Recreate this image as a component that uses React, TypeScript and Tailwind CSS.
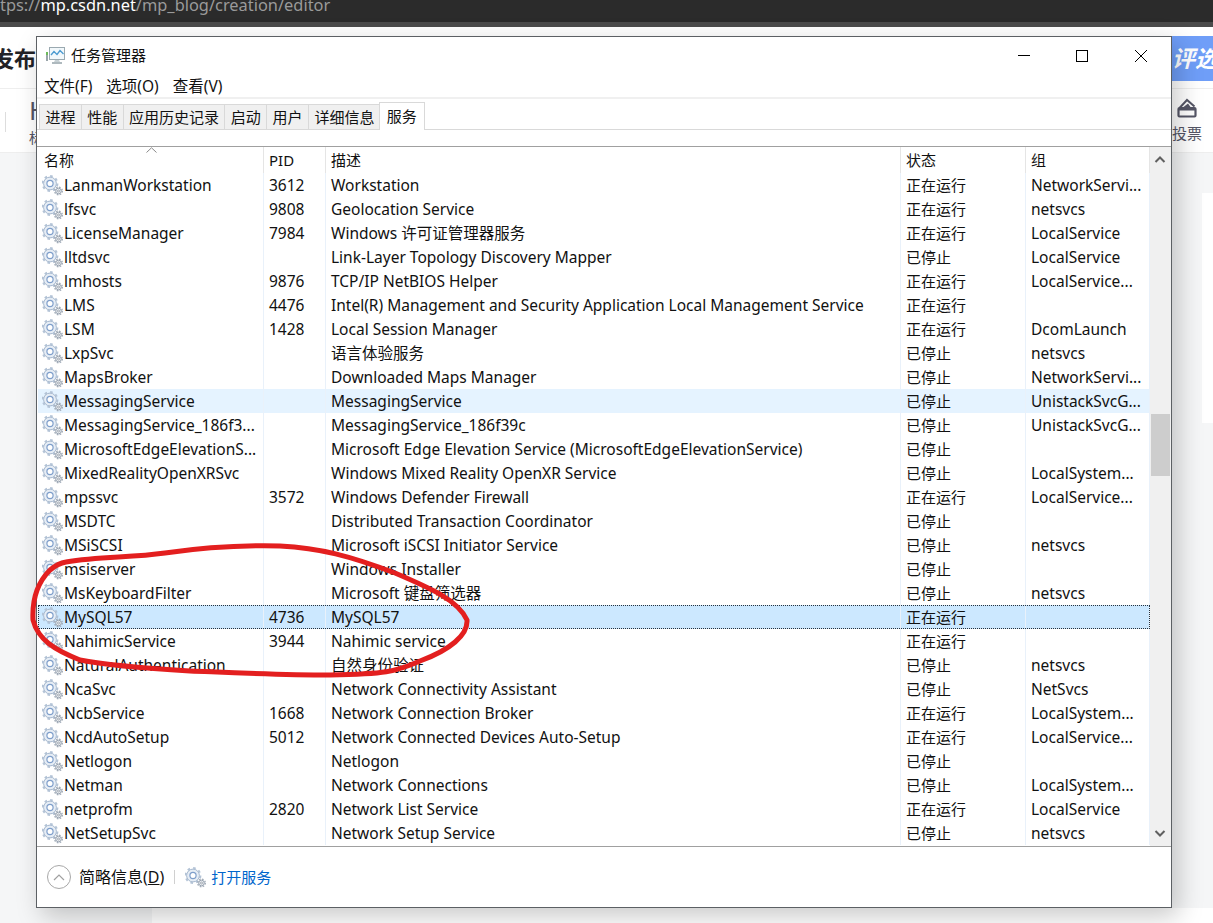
const font = "font-['Noto_Sans','Noto_Sans_CJK_SC',sans-serif]";

const services: [string, string, string, string, string][] = [
  ["LanmanWorkstation", "3612", "Workstation", "正在运行", "NetworkServi..."],
  ["lfsvc", "9808", "Geolocation Service", "正在运行", "netsvcs"],
  ["LicenseManager", "7984", "Windows 许可证管理器服务", "正在运行", "LocalService"],
  ["lltdsvc", "", "Link-Layer Topology Discovery Mapper", "已停止", "LocalService"],
  ["lmhosts", "9876", "TCP/IP NetBIOS Helper", "正在运行", "LocalService..."],
  ["LMS", "4476", "Intel(R) Management and Security Application Local Management Service", "正在运行", ""],
  ["LSM", "1428", "Local Session Manager", "正在运行", "DcomLaunch"],
  ["LxpSvc", "", "语言体验服务", "已停止", "netsvcs"],
  ["MapsBroker", "", "Downloaded Maps Manager", "已停止", "NetworkServi..."],
  ["MessagingService", "", "MessagingService", "已停止", "UnistackSvcG..."],
  ["MessagingService_186f3...", "", "MessagingService_186f39c", "已停止", "UnistackSvcG..."],
  ["MicrosoftEdgeElevationS...", "", "Microsoft Edge Elevation Service (MicrosoftEdgeElevationService)", "已停止", ""],
  ["MixedRealityOpenXRSvc", "", "Windows Mixed Reality OpenXR Service", "已停止", "LocalSystem..."],
  ["mpssvc", "3572", "Windows Defender Firewall", "正在运行", "LocalService..."],
  ["MSDTC", "", "Distributed Transaction Coordinator", "已停止", ""],
  ["MSiSCSI", "", "Microsoft iSCSI Initiator Service", "已停止", "netsvcs"],
  ["msiserver", "", "Windows Installer", "已停止", ""],
  ["MsKeyboardFilter", "", "Microsoft 键盘筛选器", "已停止", "netsvcs"],
  ["MySQL57", "4736", "MySQL57", "正在运行", ""],
  ["NahimicService", "3944", "Nahimic service", "正在运行", ""],
  ["NaturalAuthentication", "", "自然身份验证", "已停止", "netsvcs"],
  ["NcaSvc", "", "Network Connectivity Assistant", "已停止", "NetSvcs"],
  ["NcbService", "1668", "Network Connection Broker", "正在运行", "LocalSystem..."],
  ["NcdAutoSetup", "5012", "Network Connected Devices Auto-Setup", "正在运行", "LocalService..."],
  ["Netlogon", "", "Netlogon", "已停止", ""],
  ["Netman", "", "Network Connections", "已停止", "LocalSystem..."],
  ["netprofm", "2820", "Network List Service", "正在运行", "LocalService"],
  ["NetSetupSvc", "", "Network Setup Service", "已停止", "netsvcs"],
];

const tabs = ["进程", "性能", "应用历史记录", "启动", "用户", "详细信息"];

function Gears() {
  return (
    <svg width="22" height="22" viewBox="0 0 22 22" className="shrink-0">
      <circle cx="8" cy="9.5" r="6.4" fill="#e6edf5" stroke="#a6b8ce" strokeWidth="1" />
      <circle cx="8" cy="9.5" r="7.4" fill="none" stroke="#b3c3d6" strokeWidth="2" strokeDasharray="2.6 3.2" />
      <circle cx="8" cy="9.5" r="3.1" fill="#ffffff" stroke="#7f9fcb" strokeWidth="1.2" />
      <circle cx="16.5" cy="17" r="2.8" fill="#eceff3" stroke="#98a3b0" strokeWidth="1" />
      <circle cx="16.5" cy="17" r="3.8" fill="none" stroke="#a3adb9" strokeWidth="1.4" strokeDasharray="1.6 1.4" />
      <circle cx="16.5" cy="17" r="1" fill="#ffffff" stroke="#7f8a96" strokeWidth="0.7" />
    </svg>
  );
}

function TaskIcon() {
  return (
    <svg width="20" height="19" viewBox="0 0 20 19">
      <rect x="3.5" y="1.5" width="15" height="12" fill="#f2f8fb" stroke="#9aa9b0" />
      <path d="M5 9 L8 5.5 L11 8.5 L14 4.5 L17.5 8" fill="none" stroke="#4a9ad0" strokeWidth="1.3" />
      <rect x="0" y="6" width="2" height="3" fill="#6dbb5a" />
      <rect x="0" y="9" width="2" height="6" fill="#9aa5aa" />
      <path d="M9 14 h4 l1 2 h-6 z" fill="#c6d0d4" />
      <rect x="6" y="16" width="10" height="2" fill="#aeb9be" />
    </svg>
  );
}

function ServiceRow({ row, index }: { row: (typeof services)[number]; index: number }) {
  const selected = index === 18;
  const hovered = index === 9;
  return (
    <div
      className={`grid h-6 grid-cols-[225px_62px_575px_125px_125px] items-center whitespace-nowrap ${
        selected ? "bg-[#cce8ff] outline outline-1 -outline-offset-1 outline-dotted outline-[#26323d]" : hovered ? "bg-[#e5f3ff]" : ""
      }`}
    >
      <div className="flex h-full items-center pl-1">
        <Gears />
        <span className="mt-px">{row[0]}</span>
      </div>
      <div className="flex h-full items-center border-l border-[#e9f1fa] pt-px pl-[5px]">{row[1]}</div>
      <div className="flex h-full items-center border-l border-[#e9f1fa] pt-px pl-[5px]">{row[2]}</div>
      <div className="flex h-full items-center border-l border-[#e9f1fa] pl-[5px] text-[15px]">{row[3]}</div>
      <div className="flex h-full items-center border-x border-[#e9f1fa] pt-px pl-[5px]">{row[4]}</div>
    </div>
  );
}

export default function App() {
  return (
    <div className={`relative flex h-[923px] w-[1213px] flex-col overflow-hidden bg-[#f5f6f7] ${font}`}>
      {/* browser behind the window */}
      <div className="h-[22px] overflow-hidden bg-[#2b2b2b] text-[16.4px] leading-[10px] text-[#9a9a9a]">
        tps://<span className="text-white">mp.csdn.net</span>/mp_blog/creation/editor
      </div>
      <div className="h-[5px] bg-[#4b4b4b]" />
      <div className="flex h-[61px] items-start justify-between bg-white pt-[9px]">
        <span className="-ml-[8px] pt-[7px] text-[22px] leading-[30px] font-bold text-[#222226]">发布</span>
        <div className="flex h-[45px] w-[41px] items-center overflow-hidden bg-[#6f9ef8] text-[23px] font-bold whitespace-nowrap text-white italic">
          评选
        </div>
      </div>
      <div className="flex h-[65px] justify-between border-y border-[#eeeeee] bg-white">
        <div className="flex items-start pl-[5px]">
          <div className="mt-[23px] h-5 w-px bg-[#dddddd]" />
          <div className="mt-[10px] ml-[23px] flex flex-col">
            <span className="text-[26px] leading-[22px] text-[#555666]">H</span>
            <span className="mt-[7px] text-sm leading-5 text-[#555666]">标</span>
          </div>
        </div>
        <div className="flex w-[41px] flex-col items-center pt-[9px] pr-[11px]">
          <svg width="20" height="20" viewBox="0 0 20 20">
            <path d="M2.5 10 L10 2 L17.5 8.5" fill="none" stroke="#555666" strokeWidth="2" />
            <path d="M6.5 9 L11 5.5 L13.5 9 Z" fill="#555666" />
            <rect x="1.5" y="10" width="17" height="8.5" rx="1" fill="none" stroke="#555666" strokeWidth="2.2" />
            <rect x="2" y="10" width="16" height="2.5" fill="#555666" />
          </svg>
          <span className="mt-[5px] text-[15px] leading-5 whitespace-nowrap text-[#555666]">投票</span>
        </div>
      </div>
      <div className="flex flex-1 justify-end pt-10">
        <div className="h-[230px] w-[11px] bg-white" />
      </div>
      <div className="h-[15px] pl-[152px]">
        <div className="h-full bg-white" />
      </div>

      {/* task manager window */}
      <div className="absolute top-[36px] left-[36px] flex h-[872px] w-[1136px] flex-col border border-[#5c6064] bg-white text-[15.5px] text-[#111111] shadow-[6px_8px_24px_rgba(0,0,0,0.22)]">
        <div className="flex h-[36px] items-center justify-between pt-px">
          <div className="flex items-center gap-[5px] pl-[9px] text-[15px]">
            <TaskIcon />
            <span>任务管理器</span>
          </div>
          <div className="flex items-center pr-[24px]">
            <div className="h-px w-3 bg-black" />
            <div className="ml-[46px] h-3 w-3 border border-black" />
            <svg width="12" height="12" viewBox="0 0 12 12" className="ml-[47px]">
              <path d="M0 0 L12 12 M12 0 L0 12" stroke="#000" strokeWidth="1" />
            </svg>
          </div>
        </div>
        <div className="flex h-[24px] items-center gap-[14px] pt-[3px] pl-[7px]">
          <span>文件(F)</span>
          <span>选项(O)</span>
          <span>查看(V)</span>
        </div>
        <div className="h-[2px] bg-[#f0f0f0]" />
        <div className="flex h-[31px] items-end border-b border-[#d9d9d9] pl-[2px] text-[15px]">
          {tabs.map((tab) => (
            <div key={tab} className="-mb-px flex h-[26px] items-center border border-[#d9d9d9] bg-[#f0f0f0] px-[5.4px] not-first:-ml-px">
              {tab}
            </div>
          ))}
          <div className="-mb-px -ml-[2px] flex h-[28px] items-center border border-b-0 border-[#d9d9d9] bg-white px-[7px]">服务</div>
        </div>
        <div className="h-[17px] border-b border-[#a0a0a0]" />

        <div className="flex min-h-0 flex-1 pl-px">
          <div className="w-[1112px] overflow-hidden">
            <div className="relative grid h-[26px] grid-cols-[225px_62px_575px_125px_125px] text-[15px]">
              <svg width="11" height="6" viewBox="0 0 11 6" className="absolute top-0 left-[108px]">
                <path d="M0.5 5.5 L5.5 0.8 L10.5 5.5" fill="none" stroke="#8a8a8a" />
              </svg>
              <div className="flex items-center pl-[6px]">名称</div>
              <div className="flex items-center border-l border-[#e5e5e5] pl-[5px]">PID</div>
              <div className="flex items-center border-l border-[#e5e5e5] pl-[5px]">描述</div>
              <div className="flex items-center border-l border-[#e5e5e5] pl-[5px]">状态</div>
              <div className="flex items-center border-x border-[#e5e5e5] pl-[5px]">组</div>
            </div>
            {services.map((row, index) => (
              <ServiceRow key={row[0]} row={row} index={index} />
            ))}
          </div>
          <div className="flex w-[21px] flex-col justify-between bg-[#f0f0f0] py-[8px]">
            <svg width="20" height="9" viewBox="0 0 20 9">
              <path d="M5.5 7 L10 2.5 L14.5 7" fill="none" stroke="#606060" strokeWidth="2" />
            </svg>
            <svg width="20" height="9" viewBox="0 0 20 9">
              <path d="M5.5 2 L10 6.5 L14.5 2" fill="none" stroke="#606060" strokeWidth="2" />
            </svg>
          </div>
        </div>

        <div className="flex h-[61px] items-center border-t border-[#a0a0a0] pl-[10px] text-[15px]">
          <div className="flex h-6 w-6 items-center justify-center rounded-full border border-[#a8a8a8]">
            <svg width="12" height="7" viewBox="0 0 12 7">
              <path d="M1 6 L6 1 L11 6" fill="none" stroke="#a0a0a0" strokeWidth="1.2" />
            </svg>
          </div>
          <span className="ml-[8px] text-base">
            简略信息(<span className="underline">D</span>)
          </span>
          <div className="ml-[10px] h-[14px] w-px bg-[#d0d0d0]" />
          <div className="ml-[10px]">
            <Gears />
          </div>
          <span className="ml-[4px] text-[#0066cc]">打开服务</span>
        </div>
      </div>

      {/* scrollbar thumb */}
      <div className="absolute top-[414px] left-[1151px] h-[62px] w-[19px] bg-[#cdcdcd]" />

      {/* hand drawn circle */}
      <svg className="pointer-events-none absolute inset-0" width="1213" height="923" viewBox="0 0 1213 923">
        <path
          d="M66 562 C100 556 130 558 165 553 C200 548 240 545 280 546 C320 548 350 556 395 573 C430 588 458 600 467 620 C468 635 450 650 420 661 C395 672 385 674 330 675 C280 675 240 673 190 671 C140 668 105 665 80 660 C55 650 38 640 33 620 C32 600 38 582 50 570 C56 565 60 563 66 562"
          fill="none"
          stroke="#e31f1f"
          strokeWidth="5"
          strokeLinecap="round"
        />
      </svg>
    </div>
  );
}
